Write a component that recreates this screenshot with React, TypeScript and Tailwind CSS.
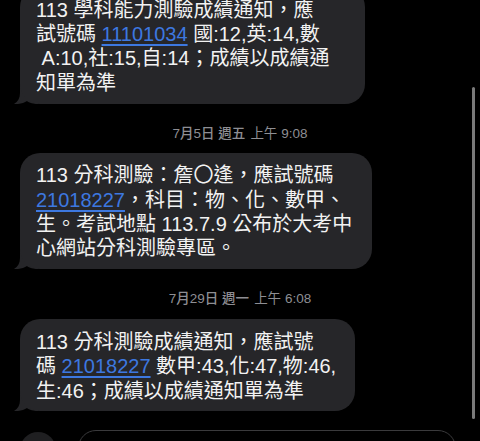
import type { ReactNode } from 'react'

const FONT = "font-['Liberation_Sans','Noto_Sans_CJK_TC',sans-serif]"

function Link({ children }: { children: ReactNode }) {
  return <span className="text-[#3d78e0] underline decoration-[1.5px] underline-offset-[3px]">{children}</span>
}

function Tail() {
  return (
    <svg
      className="absolute left-[-6px] bottom-0"
      width="24"
      height="24"
      viewBox="0 0 24 24"
    >
      <path
        d="M6 0 V13 C6 18 4 21.5 0 24 C5 24.5 10 23 13 21 C15 23 20 24 24 24 V0 Z"
        fill="#262629"
      />
    </svg>
  )
}

function Bubble({ width, children }: { width: string; children: ReactNode }) {
  return (
    <div className={`relative ml-5 ${width}`}>
      <Tail />
      <div className="relative rounded-[20px] bg-[#262629] px-4 pt-[10.5px] pb-[8.5px] text-[20px] leading-[24.4px] text-[#f2f2f2] whitespace-nowrap">
        {children}
      </div>
    </div>
  )
}

function Stamp({ date, time }: { date: string; time: string }) {
  return (
    <div className="flex justify-center text-[13.5px] leading-[18px] text-[#8e8e93]">
      <span className="font-medium">{date}</span>
      <span className="ml-[5px]">{time}</span>
    </div>
  )
}

export default function App() {
  return (
    <div className={`relative h-[441px] w-[480px] overflow-hidden bg-black ${FONT}`}>
      <div className="flex flex-col">
        <div className="mt-[-13px]">
          <Bubble width="w-[345px]">
            113 學科能力測驗成績通知，應
            <br />
            試號碼 <Link>11101034</Link> 國:12,英:14,數
            <br />
            &nbsp;A:10,社:15,自:14；成績以成績通
            <br />
            知單為準
          </Bubble>
        </div>

        <div className="mt-[21px] mb-[10px]">
          <Stamp date="7月5日 週五" time="上午 9:08" />
        </div>

        <Bubble width="w-[352px]">
          113 分科測驗：詹〇逢，應試號碼
          <br />
          <Link>21018227</Link>，科目：物、化、數甲、
          <br />
          生。考試地點 113.7.9 公布於大考中
          <br />
          心網站分科測驗專區。
        </Bubble>

        <div className="mt-[21px] mb-[11px]">
          <Stamp date="7月29日 週一" time="上午 6:08" />
        </div>

        <Bubble width="w-[335px]">
          113 分科測驗成績通知，應試號
          <br />
          碼 <Link>21018227</Link> 數甲:43,化:47,物:46,
          <br />
          生:46；成績以成績通知單為準
        </Bubble>

        <div className="mt-[19px] flex items-start">
          <div className="ml-5 mt-[2px] h-9 w-9 shrink-0 rounded-full bg-[#1f1f21]" />
          <div className="ml-[22px] h-9 w-[378px] rounded-full border border-[#3a3a3c]" />
        </div>
      </div>

      <div className="absolute right-[5px] top-[87px] h-[332px] w-[3px] rounded-full bg-[#7a7a7a]" />
    </div>
  )
}
